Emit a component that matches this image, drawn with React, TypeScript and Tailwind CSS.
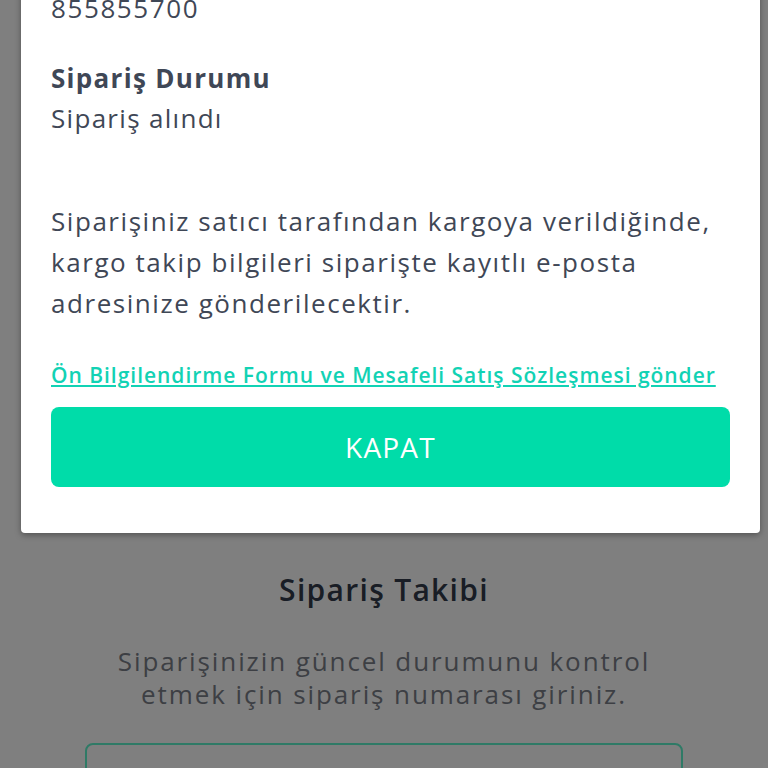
import React from "react";

const font = { fontFamily: '"Open Sans", "Noto Sans", sans-serif' };

export default function App() {
  return (
    <div className="relative h-[768px] w-[768px] overflow-hidden bg-white" style={font}>
      {/* Page content under the overlay */}
      <div className="flex flex-col items-center pt-[568px]">
        <h1 className="text-[30px] font-semibold leading-[44px] tracking-[1.3px] text-[#323a4a]">Sipariş Takibi</h1>
        <p className="mt-[33px] w-[570px] text-center text-[26px] leading-[33px] tracking-[1.9px] text-[#7a7f88]">
          Siparişinizin güncel durumunu kontrol etmek için sipariş numarası giriniz.
        </p>
        <div className="mt-[32px] h-[60px] w-[598px] rounded-lg border-2 border-[#5ef4cc] bg-white" />
      </div>

      {/* Overlay */}
      <div className="absolute inset-0 bg-black/50" />

      {/* Modal */}
      <div className="absolute left-[21px] top-[-42px] w-[739px] rounded-[4px] bg-white px-[30px] pb-[46px] pt-[30px] shadow-[0_2px_6px_rgba(0,0,0,0.35)]">
        <div className="text-[26px] leading-[40px] tracking-[1.6px] text-[#3f4756]">855855700</div>

        <div className="mt-[30px] text-[26px] font-bold leading-[40px] tracking-[1.3px] text-[#3f4756]">Sipariş Durumu</div>
        <div className="text-[26px] leading-[40px] tracking-[1.3px] text-[#3f4756]">Sipariş alındı</div>

        <p className="mt-[63px] text-[26px] leading-[41px] tracking-[1.55px] text-[#3f4756]">
          Siparişiniz satıcı tarafından kargoya verildiğinde, kargo takip bilgileri siparişte kayıtlı e-posta adresinize gönderilecektir.
        </p>

        <a className="mt-[36px] block text-[21px] font-semibold leading-[30px] tracking-[0.97px] text-[#12d2b4] underline" href="#">
          Ön Bilgilendirme Formu ve Mesafeli Satış Sözleşmesi gönder
        </a>

        <button className="mt-[17px] flex h-[80px] w-full items-center justify-center rounded-[8px] bg-[#00dca9] text-[28px] tracking-[1.2px] text-white">
          KAPAT
        </button>
      </div>
    </div>
  );
}
